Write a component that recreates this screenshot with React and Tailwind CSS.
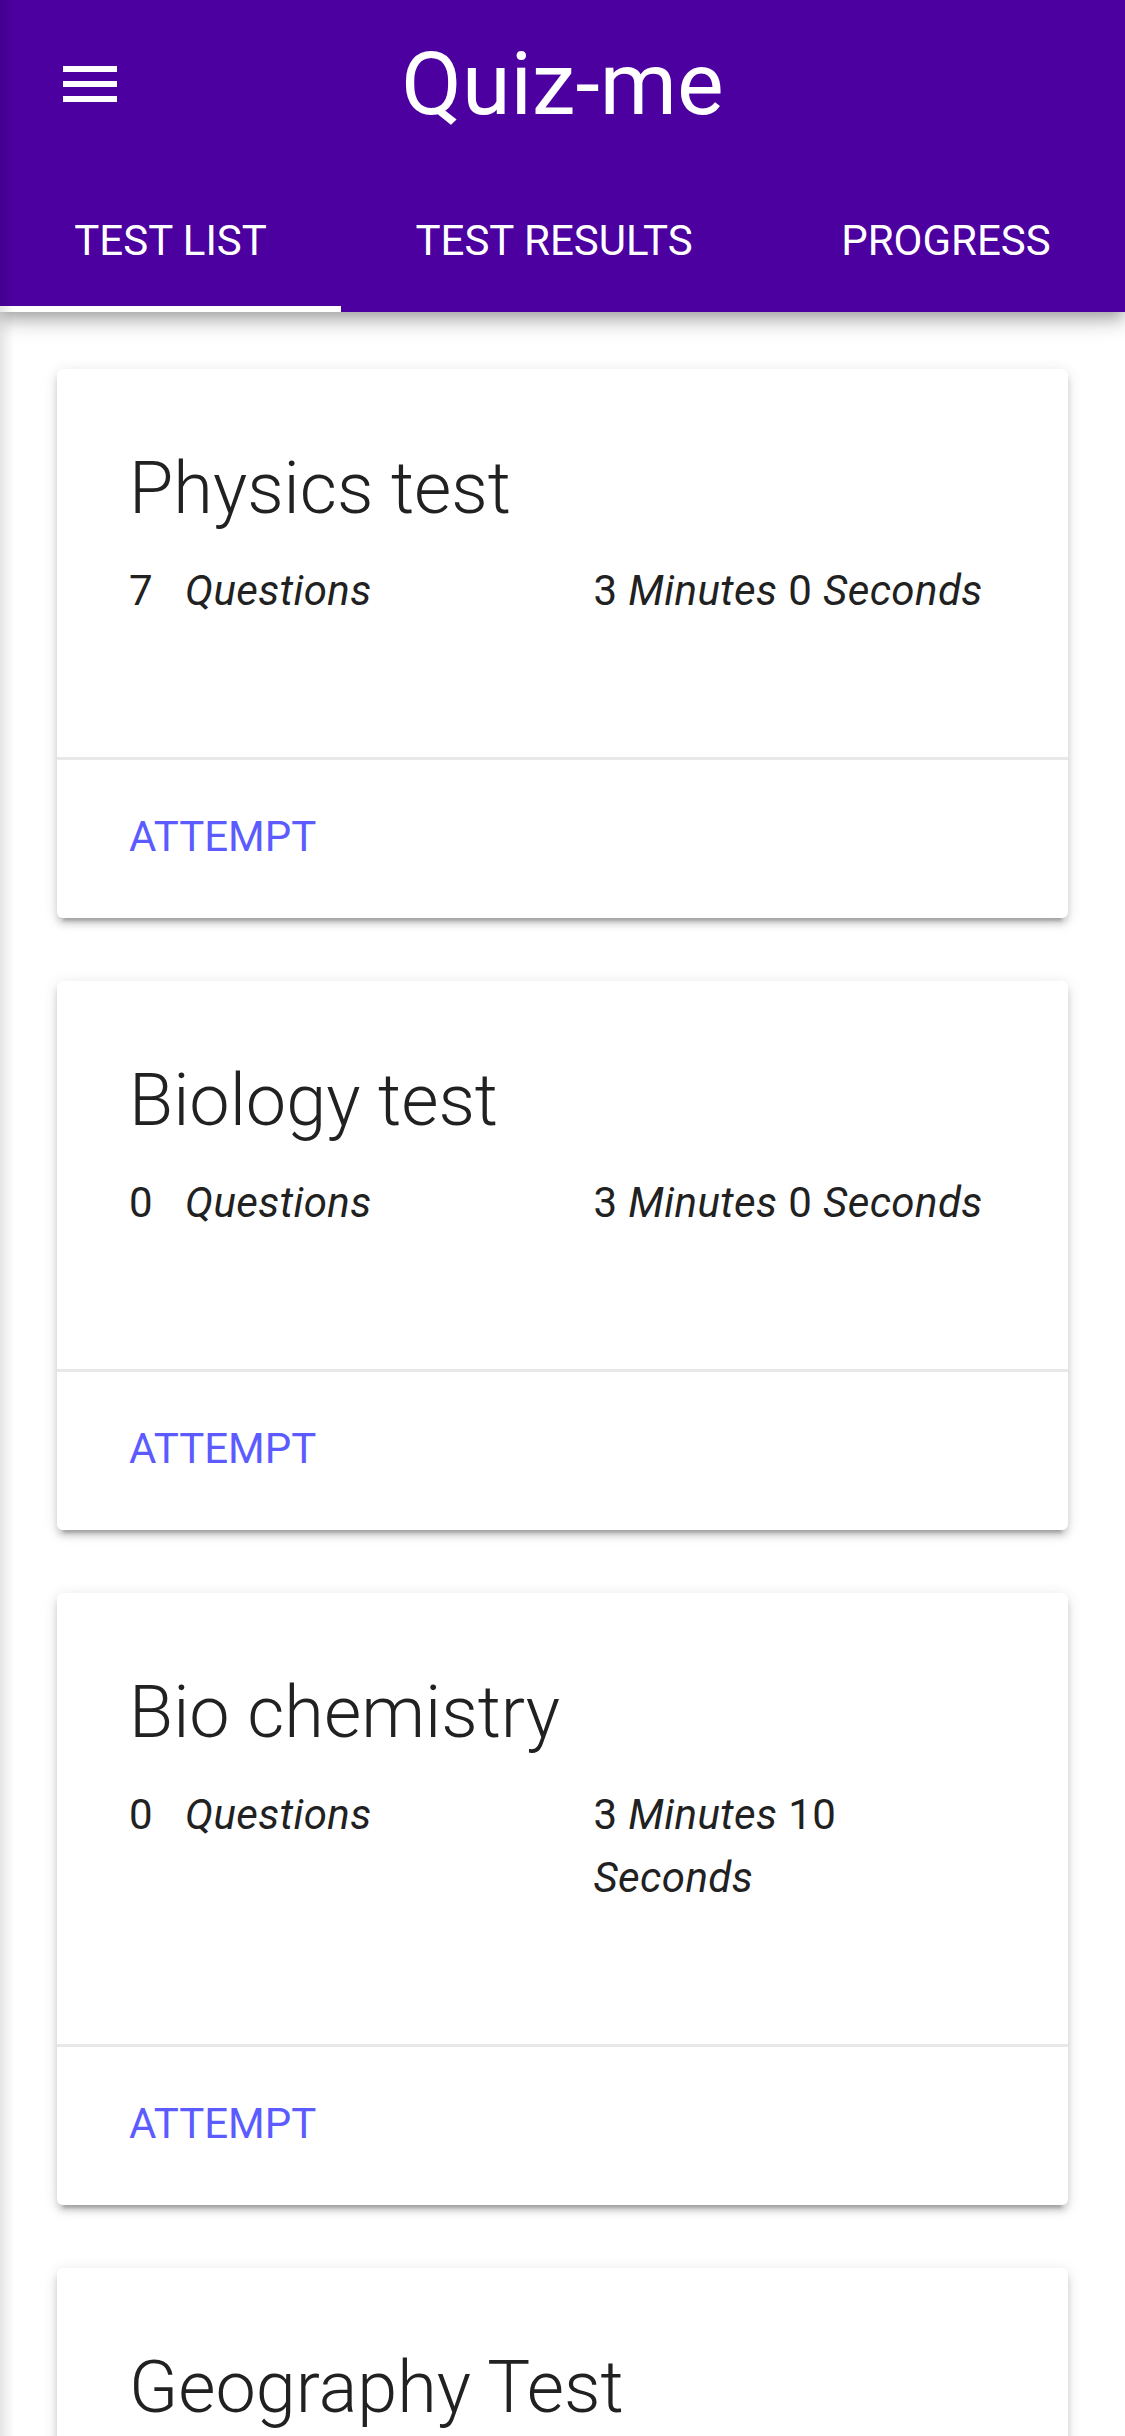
import React from "react";

const tests = [
    { id: 1, name: "Physics test", questions: 7, minutes: 3, seconds: 0 },
    { id: 2, name: "Biology test", questions: 0, minutes: 3, seconds: 0 },
    { id: 3, name: "Bio chemistry", questions: 0, minutes: 3, seconds: 10 },
    { id: 4, name: "Geography Test", questions: 0, minutes: 5, seconds: 0 },
];

const tabs = ["TEST LIST", "TEST RESULTS", "PROGRESS"];

function MenuIcon() {
    return (
        <svg viewBox="0 0 24 24" className="w-[72px] h-[72px]" fill="white">
            <path d="M3 18h18v-2H3v2zm0-5h18v-2H3v2zm0-7v2h18V6H3z" />
        </svg>
    );
}

function TestCard({ test }) {
    return (
        <div className="bg-white rounded-[6px] shadow-[0_9px_3px_-6px_rgba(0,0,0,0.2),0_6px_6px_0_rgba(0,0,0,0.14),0_3px_15px_0_rgba(0,0,0,0.12)]">
            <div className="px-[72px] pt-[72px] pb-[135px]">
                <h2 className="text-[72px] leading-[96px] font-light text-[#212121]">{test.name}</h2>
                <div className="grid grid-cols-2 gap-x-[62px] mt-[22px] text-[42px] leading-[63px] tracking-[0.00938em] text-[#212121]">
                    <p>
                        {test.questions}
                        <i className="ml-[32px]">Questions</i>
                    </p>
                    <p>
                        {test.minutes} <i>Minutes</i> {test.seconds} <i>Seconds</i>
                    </p>
                </div>
            </div>
            <div className="border-t-[3px] border-[#e8e8e8] h-[161px] flex items-center px-[72px] pb-[5px]">
                <button className="text-[42px] leading-[63px] text-[#5b5bff] font-normal">ATTEMPT</button>
            </div>
        </div>
    );
}

export default function App() {
    return (
        <div className="min-h-screen bg-white font-['Roboto',sans-serif] relative overflow-hidden">
            <header className="bg-[#4c00a0] text-white shadow-[0_6px_12px_-3px_rgba(0,0,0,0.2),0_12px_15px_0_rgba(0,0,0,0.14),0_3px_30px_0_rgba(0,0,0,0.12)] relative z-10">
                <div className="h-[168px] grid grid-cols-[1fr_auto_1fr] items-center">
                    <div className="pl-[54px]">
                        <MenuIcon />
                    </div>
                    <h1 className="text-[88px] leading-none font-normal">Quiz-me</h1>
                    <div></div>
                </div>
                <div className="h-[144px] flex">
                    {tabs.map((tab, i) => (
                        <div key={tab} className="flex-auto flex flex-col">
                            <div className="flex-1 flex items-center justify-center text-[42px] leading-none pt-[8px]">{tab}</div>
                            <div className={`h-[6px] ${i === 0 ? "bg-white" : ""}`}></div>
                        </div>
                    ))}
                </div>
            </header>

            <main className="flex flex-col gap-[63px] px-[57px] pt-[57px] pb-[57px]">
                {tests.map(test => (
                    <TestCard key={test.id} test={test} />
                ))}
            </main>

            <div className="fixed left-0 top-0 bottom-0 w-[14px] bg-gradient-to-r from-black/10 to-transparent z-20"></div>
        </div>
    );
}
